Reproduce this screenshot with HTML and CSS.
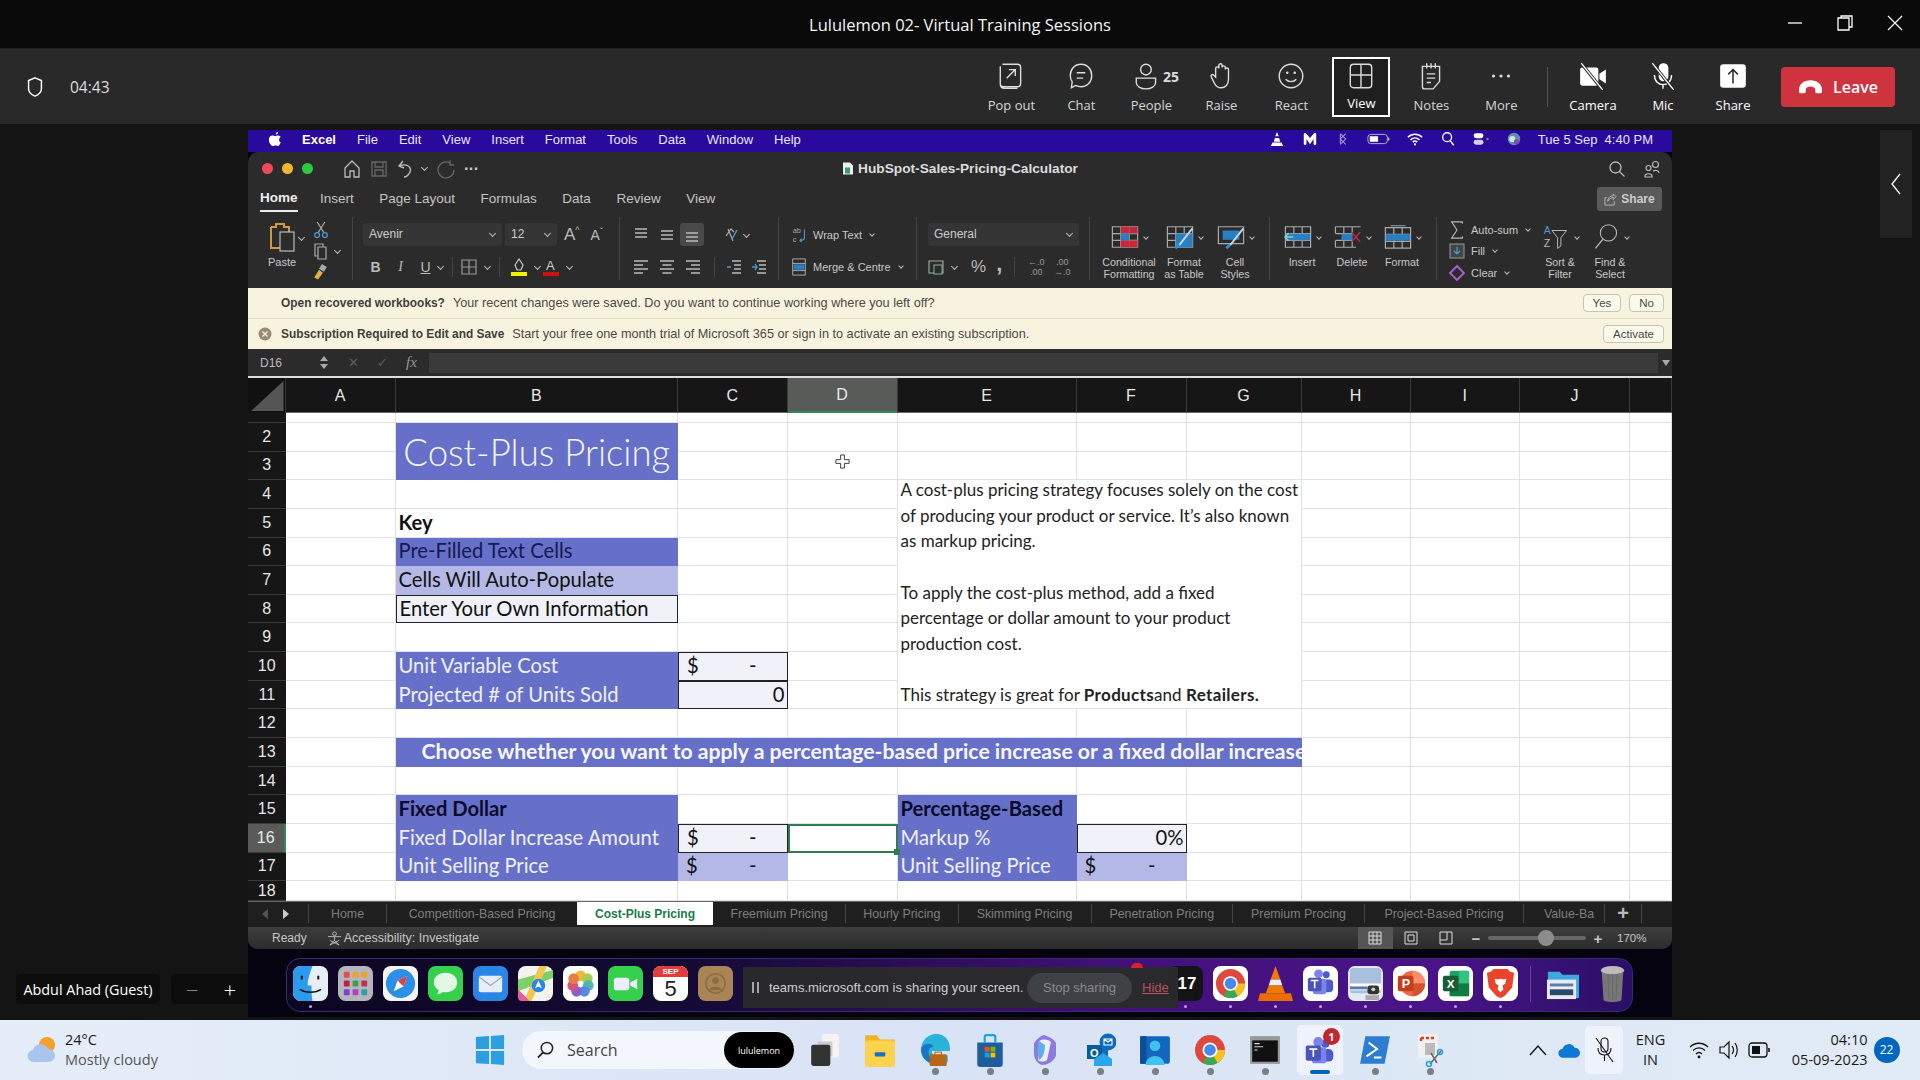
FILE: index.html
```html
<!DOCTYPE html>
<html lang="en">
<head>
  <meta charset="UTF-8" />
  <title>Lululemon 02- Virtual Training Sessions</title>
  <link rel="stylesheet" href="styles.css">
</head>
<body>
<svg class="defs">
  <symbol id="al-l" viewBox="0 0 16 16"><path d="M1 2h14M1 6h9M1 10h14M1 14h9" stroke="currentColor" stroke-width="1.5"/></symbol>
  <symbol id="al-c" viewBox="0 0 16 16"><path d="M1 2h14M3.5 6h9M1 10h14M3.5 14h9" stroke="currentColor" stroke-width="1.5"/></symbol>
  <symbol id="al-r" viewBox="0 0 16 16"><path d="M1 2h14M6 6h9M1 10h14M6 14h9" stroke="currentColor" stroke-width="1.5"/></symbol>
  <symbol id="grid" viewBox="0 0 30 26"><path d="M1.5 2h27v22h-27zM1.5 9.3h27M1.5 16.6h27M10.5 2v22M19.5 2v22" fill="none" stroke="#aaa" stroke-width="1.3"/></symbol>
</svg>

<header class="titlebar">
  <div class="title">Lululemon 02- Virtual Training Sessions</div>
  <div class="win-btns">
    <svg viewBox="0 0 20 20"><path d="M3 10h14" stroke="#fff" stroke-width="1.3"/></svg>
    <svg viewBox="0 0 20 20"><path d="M3 5h11v12H3zM6 5V3h11v11h-3" fill="none" stroke="#fff" stroke-width="1.3"/></svg>
    <svg viewBox="0 0 20 20"><path d="M3 3l14 14M17 3L3 17" stroke="#fff" stroke-width="1.2"/></svg>
  </div>
</header>

<nav class="toolbar">
  <div class="meeting">
    <svg class="shield" viewBox="0 0 20 24"><path d="M10 2l7 3v9c0 4-3 6.500-7 8-4-1.500-7-4-7-8V5z" fill="none" stroke="#fff" stroke-width="1.6"/></svg>
    <span>04:43</span>
  </div>
  <div class="tool"><svg viewBox="0 0 28 28"><path d="M6 3h14a3 3 0 0 1 3 3v15a3 3 0 0 1-3 3H7a3 3 0 0 1-3-3V5M4 21.500c0 2 1 4 4 4h12M10 16l8-8M12 8h6v6" fill="none" stroke="#ddd" stroke-width="1.300"/></svg><label>Pop out</label></div>
  <div class="tool"><svg viewBox="0 0 28 28"><path d="M14 3c6 0 10 4.500 10 10.500S20 24 14 24c-2 0-3.500-.4-5-1.200L5 25l.8-5.500C4.600 17.800 4 16 4 13.500 4 7.500 8 3 14 3zM10 11h8M10 16h6" fill="none" stroke="#ddd" stroke-width="1.300"/></svg><label>Chat</label></div>
  <div class="tool people"><div class="people-ic"><svg viewBox="0 0 28 28"><circle cx="13" cy="8" r="5" fill="none" stroke="#ddd" stroke-width="1.300"/><path d="M4 16h18v4c0 3.500-4 6-9 6s-9-2.500-9-6z" fill="none" stroke="#ddd" stroke-width="1.300"/></svg><b>25</b></div><label>People</label></div>
  <div class="tool"><svg viewBox="0 0 28 28"><path d="M9 15V7a1.500 1.500 0 0 1 3 0V4a1.500 1.500 0 0 1 3 0v2a1.500 1.500 0 0 1 3 0v2a1.500 1.500 0 0 1 3 0v9c0 5-3 8-7 8-3 0-5-2-6-4l-3-6c-1-2 1-3 2-2z" fill="none" stroke="#ddd" stroke-width="1.300"/></svg><label>Raise</label></div>
  <div class="tool"><svg viewBox="0 0 28 28"><circle cx="14" cy="14" r="11" fill="none" stroke="#ddd" stroke-width="1.300"/><circle cx="10.500" cy="11" r="1.200" fill="#ddd"/><circle cx="17.500" cy="11" r="1.200" fill="#ddd"/><path d="M9 17c2.500 3 7.500 3 10 0" fill="none" stroke="#ddd" stroke-width="1.300"/></svg><label>React</label></div>
  <div class="tool tool-on"><svg viewBox="0 0 28 28"><path d="M7 3h14a3 3 0 0 1 3 3v16a3 3 0 0 1-3 3H7a3 3 0 0 1-3-3V6a3 3 0 0 1 3-3zM14 3v22M4 13h20" fill="none" stroke="#ddd" stroke-width="1.300"/></svg><label>View</label></div>
  <div class="tool"><svg viewBox="0 0 28 28"><path d="M6 5h16v14l-6 7H8a2 2 0 0 1-2-2zM10 2v5M14 2v5M18 2v5M10 12h8M10 16h8M10 20h4" fill="none" stroke="#ddd" stroke-width="1.300"/></svg><label>Notes</label></div>
  <div class="tool"><svg viewBox="0 0 28 28"><circle cx="7" cy="14" r="1.500" fill="#ddd"/><circle cx="14" cy="14" r="1.500" fill="#ddd"/><circle cx="21" cy="14" r="1.500" fill="#ddd"/></svg><label>More</label></div>
  <div class="tool-sep"></div>
  <div class="tool bright"><svg viewBox="0 0 28 28"><path d="M2 8a2 2 0 0 1 2-2h13a2 2 0 0 1 2 2v13a2 2 0 0 1-2 2H4a2 2 0 0 1-2-2zM20 12l6-4v13l-6-4z" fill="#fff"/><path d="M3 2l20 25" stroke="#292929" stroke-width="3"/><path d="M3 2l20 25" stroke="#fff" stroke-width="1.300"/></svg><label>Camera</label></div>
  <div class="tool bright"><svg viewBox="0 0 28 28"><rect x="10" y="2" width="9" height="17" rx="4.500" fill="#fff"/><path d="M6 13c0 6 4 9 8 9s8-3 8-9M14 22v4" fill="none" stroke="#fff" stroke-width="1.300"/><path d="M4 2l20 25" stroke="#292929" stroke-width="3"/><path d="M4 2l20 25" stroke="#fff" stroke-width="1.300"/></svg><label>Mic</label></div>
  <div class="tool bright"><svg viewBox="0 0 28 28"><rect x="2" y="3" width="24" height="22" rx="3" fill="#fff"/><path d="M14 21V8M9.500 12.500L14 8l4.500 4.500" fill="none" stroke="#292929" stroke-width="1.400"/></svg><label>Share</label></div>
  <div class="leave"><svg viewBox="0 0 26 16"><path d="M1 11c0-6 5-10 12-10s12 4 12 10v2c0 1-.6 1.500-1.500 1.500h-4c-1 0-1.500-.5-1.500-1.500v-2c0-2-2-3.500-5-3.500S8 9 8 11v2c0 1-.5 1.500-1.500 1.500h-4C1.600 14.500 1 14 1 13z" fill="#fff"/></svg>Leave</div>
</nav>

<main class="stage">
  <aside class="left-col">
    <div class="name-pill">Abdul Ahad (Guest)</div>
    <div class="zoom-pill"><span class="dim">&minus;</span><span>+</span></div>
  </aside>

  <section class="share">
    <div class="mac-menu">
      <svg class="apple" viewBox="0 0 16 18"><path d="M11.500 1c.1 1.500-1.200 3-2.800 2.900C8.500 2.500 10 1.100 11.500 1zM14.500 13c-.8 2-2 4-3.300 4-1 0-1.500-.6-2.800-.6s-1.800.6-2.800.6C3.500 17 1 13 1 9.800 1 6.800 3 5 5 5c1.200 0 2.300.8 3.100.8S9.900 5 11.400 5c1.200 0 2.400.6 3.100 1.700-2.600 1.600-2.200 5.200 0 6.300z" fill="#fff"/></svg>
      <b>Excel</b><span>File</span><span>Edit</span><span>View</span><span>Insert</span><span>Format</span><span>Tools</span><span>Data</span><span>Window</span><span>Help</span>
      <div class="mac-status">
        <svg viewBox="0 0 16 18"><path d="M8 1l2 5H6zM5.500 8h5l1 4h-7zM3 13h10l2 4H1z" fill="#fff"/></svg>
        <svg viewBox="0 0 18 18"><path d="M2 15V4c0-2 2-2 3-1l4 5 4-5c1-1 3-1 3 1v11c-1 1.500-3 1-3-1V9l-4 6-4-6v5c0 2-2 2.500-3 1z" fill="#fff"/></svg>
        <svg viewBox="0 0 18 18"><path d="M6 3l6 6-6 6M6 3v12M12 3L6 9l6 6" fill="none" stroke="#9a93d8" stroke-width="1.200"/></svg>
        <svg viewBox="0 0 26 14"><rect x="1" y="2" width="21" height="10" rx="3" fill="none" stroke="#bbb" stroke-width="1"/><rect x="3" y="4" width="9" height="6" fill="#fff"/><path d="M23.500 5.500v3" stroke="#bbb" stroke-width="1.500"/></svg>
        <svg viewBox="0 0 18 18"><path d="M1 7c4.500-4.500 11.500-4.500 16 0M4 10c3-3 7-3 10 0M6.500 12.500c1.500-1.500 3.500-1.500 5 0" fill="none" stroke="#fff" stroke-width="1.700"/><circle cx="9" cy="15" r="1.300" fill="#fff"/></svg>
        <svg viewBox="0 0 18 18"><circle cx="8" cy="7" r="5" fill="none" stroke="#fff" stroke-width="1.500"/><path d="M11.500 11l4 5" stroke="#fff" stroke-width="1.500"/></svg>
        <svg viewBox="0 0 22 18"><rect x="2" y="2" width="12" height="6" rx="3" fill="#fff"/><rect x="2" y="10" width="12" height="6" rx="3" fill="#fff" opacity=".8"/><circle cx="19" cy="9" r="1.500" fill="#c06a5a"/></svg>
        <svg viewBox="0 0 18 18"><circle cx="9" cy="9" r="7" fill="#5f8fb0"/><circle cx="7" cy="9" r="3.500" fill="#d0e4e0"/><circle cx="12" cy="12" r="3" fill="#7a4fb0"/></svg>
        <span>Tue 5 Sep&nbsp; 4:40 PM</span>
      </div>
    </div>

    <div class="xl">
      <div class="xl-title">
        <div class="xl-title-l">
          <i class="dot red"></i><i class="dot yellow"></i><i class="dot green"></i>
          <svg class="qa qa-first" viewBox="0 0 20 20"><path d="M3 18V9l7-7 7 7v9h-5v-6H8v6z" fill="none" stroke="#bbb" stroke-width="1.300"/></svg>
          <svg class="qa" viewBox="0 0 20 20"><path d="M3 3h14v14H3zM6 3v5h8V3M6 17v-6h8v6" fill="none" stroke="#666" stroke-width="1.300"/></svg>
          <svg class="qa" viewBox="0 0 20 20"><path d="M7 2L3 7l5 2M3 7c8-3 13 1 11 6-1 3-4 5-6 5" fill="none" stroke="#bbb" stroke-width="1.400"/></svg>
          <i class="v v-qa"></i>
          <svg class="qa" viewBox="0 0 20 20"><path d="M13 4a8 8 0 1 0 4 7M13 1v5h4" fill="none" stroke="#666" stroke-width="1.300"/></svg>
          <span class="qa-more">&middot;&middot;&middot;</span>
        </div>
        <div class="xl-name"><svg viewBox="0 0 12 14"><path d="M1 1h7l3 3v9H1z" fill="#eee"/><rect x="3" y="6" width="5" height="6" fill="#3c9c68"/></svg>HubSpot-Sales-Pricing-Calculator</div>
        <div class="xl-title-r">
          <svg viewBox="0 0 18 18"><circle cx="7.500" cy="7.500" r="5.500" fill="none" stroke="#bbb" stroke-width="1.300"/><path d="M11.500 11.500l5 5" stroke="#bbb" stroke-width="1.300"/></svg>
          <svg viewBox="0 0 18 18"><circle cx="12.500" cy="4.500" r="3" fill="none" stroke="#bbb" stroke-width="1.200"/><circle cx="5.500" cy="8" r="2.500" fill="none" stroke="#bbb" stroke-width="1.200"/><path d="M2 16c0-3 7-3 7 0v1H2zM10 11c2-1 6-1 6 2" fill="none" stroke="#bbb" stroke-width="1.200"/></svg>
        </div>
      </div>

      <div class="xl-tabs">
        <span class="xl-tab on">Home</span><span class="xl-tab">Insert</span><span class="xl-tab">Page Layout</span><span class="xl-tab">Formulas</span><span class="xl-tab">Data</span><span class="xl-tab">Review</span><span class="xl-tab">View</span>
        <div class="xl-share"><svg viewBox="0 0 14 14"><path d="M3 5H1v8h10V9M4 9c0-4 3-6 6-6V1l3 3-3 3V5c-2 0-4 1-6 4z" fill="none" stroke="#bbb" stroke-width="1"/></svg>Share</div>
      </div>

      <div class="ribbon">
        <div class="rg rg-clip">
          <div class="paste">
            <svg viewBox="0 0 30 32"><path d="M4 6h5V3h8v3h5v5M15 27H4V6" fill="none" stroke="#d0993c" stroke-width="2"/><rect x="13" y="11" width="14" height="19" fill="#2b2b2b" stroke="#bbb" stroke-width="1.200"/></svg>
            <span>Paste</span>
          </div>
          <i class="v v-paste"></i>
          <div class="clip-col">
            <svg viewBox="0 0 16 18"><path d="M4 1l7 11M12 1L5 12" stroke="#aaa" stroke-width="1.200"/><circle cx="4" cy="14.500" r="2.500" fill="none" stroke="#4a9ad0" stroke-width="1.300"/><circle cx="12" cy="14.500" r="2.500" fill="none" stroke="#4a9ad0" stroke-width="1.300"/></svg>
            <div><svg viewBox="0 0 16 18"><path d="M2 2h8v3h3v12H5v-3H2zM5 14V5h5" fill="none" stroke="#aaa" stroke-width="1.200"/></svg><i class="v"></i></div>
            <svg viewBox="0 0 16 18"><path d="M9 1l5 3-3 5-5-3z" fill="#aaa"/><path d="M6 7l4 3-5 7-4-2z" fill="#e0b040"/></svg>
          </div>
        </div>

        <div class="rg rg-font">
          <div class="rrow">
            <div class="sel sel-font">Avenir<i class="v"></i></div>
            <div class="sel sel-size">12<i class="v"></i></div>
            <span class="a-big">A<sup>^</sup></span><span class="a-small">A<sup>&#711;</sup></span>
          </div>
          <div class="rrow rrow-2">
            <b class="tb">B</b><em class="tb tb-i">I</em><u class="tb">U</u><i class="v"></i>
            <i class="rsep"></i>
            <svg class="ic-16" viewBox="0 0 16 16"><path d="M1 1h14v14H1zM8 1v14M1 8h14" fill="none" stroke="#999" stroke-width="1.200"/></svg><i class="v"></i>
            <i class="rsep"></i>
            <svg class="ic-16 ic-fill" viewBox="0 0 16 18"><path d="M8 1l4 6-2 5H6L4 7z" fill="none" stroke="#ccc" stroke-width="1.200"/><rect x="0" y="14" width="16" height="4" fill="#f0f000"/></svg><i class="v"></i>
            <svg class="ic-16 ic-fill" viewBox="0 0 16 18"><text x="3" y="12" font-size="13" fill="#ccc" font-family="Liberation Sans">A</text><rect x="0" y="14" width="16" height="4" fill="#d01010"/></svg><i class="v"></i>
          </div>
        </div>

        <div class="rg rg-align">
          <div class="rrow">
            <svg class="al" viewBox="0 0 16 16"><path d="M2 2h12M2 6h12M2 10h12" stroke="#bbb" stroke-width="1.300"/></svg>
            <svg class="al" viewBox="0 0 16 16"><path d="M2 4h12M2 8h12M2 12h12" stroke="#bbb" stroke-width="1.300"/></svg>
            <span class="al-on"><svg class="al" viewBox="0 0 16 16"><path d="M2 6h12M2 10h12M2 14h12" stroke="#bbb" stroke-width="1.300"/></svg></span>
            <svg class="al al-orient" viewBox="0 0 16 16"><path d="M4 2l5 12M2 9l5-7 3 3" fill="none" stroke="#aaa" stroke-width="1.200"/><path d="M13 3l-5 9" stroke="#4a9ad0" stroke-width="1.500"/></svg><i class="v"></i>
          </div>
          <div class="rrow rrow-2">
            <svg class="al"><use href="#al-l"/></svg><svg class="al"><use href="#al-c"/></svg><svg class="al"><use href="#al-r"/></svg>
            <i class="rsep rsep-al"></i>
            <svg class="al al-ind" viewBox="0 0 16 16"><path d="M6 2h9M8 6h7M8 10h7M6 14h9" stroke="#bbb" stroke-width="1.300"/><path d="M1 8h4" stroke="#4a9ad0" stroke-width="1.500"/></svg>
            <svg class="al al-ind2" viewBox="0 0 16 16"><path d="M6 2h9M8 6h7M8 10h7M6 14h9" stroke="#bbb" stroke-width="1.300"/><path d="M1 8h5M4 5l2 3-2 3" fill="none" stroke="#4a9ad0" stroke-width="1.300"/></svg>
          </div>
        </div>

        <div class="rg rg-wrap">
          <div class="rrow"><svg class="ic-16" viewBox="0 0 16 20"><text x="1" y="8" font-size="8" fill="#aaa" font-family="Liberation Sans">ab</text><text x="1" y="18" font-size="8" fill="#aaa" font-family="Liberation Sans">c</text><path d="M14 4v9c0 2-2 3-5 3M11 14l-2 2 2 2" fill="none" stroke="#4a9ad0" stroke-width="1.200"/></svg><span>Wrap Text</span><i class="v"></i></div>
          <div class="rrow rrow-2"><svg class="ic-16" viewBox="0 0 16 20"><path d="M1 1h14v18H1zM1 6h14M1 14h14" fill="none" stroke="#aaa" stroke-width="1.100"/><rect x="2" y="7" width="12" height="6" fill="#2a7fc0"/></svg><span>Merge &amp; Centre</span><i class="v"></i></div>
        </div>

        <div class="rg rg-num">
          <div class="sel sel-num">General<i class="v"></i></div>
          <div class="rrow rrow-2">
            <svg class="ic-16" viewBox="0 0 16 16"><path d="M1 2h14v12H1z" fill="none" stroke="#aaa" stroke-width="1.100"/><rect x="6" y="6" width="8" height="9" fill="#2b2b2b" stroke="#8bb58b"/></svg><i class="v"></i>
            <span class="pct">%</span><span class="cma">,</span><i class="rsep"></i>
            <span class="dec">&larr;.0<br>.00</span><span class="dec">.00<br>&rarr;.0</span>
          </div>
        </div>

        <div class="rg rg-styles">
          <div class="big bw56"><div class="big-ic">
            <svg viewBox="0 0 30 26"><use href="#grid"/><rect x="10.500" y="2" width="9" height="7.300" fill="#c7283c"/><rect x="10.500" y="9.300" width="9" height="7.300" fill="#2a7fc0"/><rect x="10.500" y="16.600" width="9" height="7.400" fill="#c7283c"/><rect x="19.500" y="2" width="9" height="7.300" fill="#c7283c" opacity=".9"/><rect x="19.500" y="16.600" width="9" height="7.400" fill="#c7283c"/></svg><i class="v"></i></div>
            <span>Conditional<br>Formatting</span></div>
          <div class="big bw54"><div class="big-ic">
            <svg viewBox="0 0 30 26"><use href="#grid"/><rect x="10.500" y="9.300" width="18" height="14.700" fill="#2a7fc0"/><path d="M28 4L14 22" stroke="#c8d8e8" stroke-width="2"/><path d="M14 21l-4 4" stroke="#2a90d8" stroke-width="3"/></svg><i class="v"></i></div>
            <span>Format<br>as Table</span></div>
          <div class="big bw48"><div class="big-ic">
            <svg viewBox="0 0 30 26"><path d="M1.500 2h27v18h-27z" fill="none" stroke="#aaa" stroke-width="1.300"/><rect x="6" y="6" width="18" height="10" fill="#2a7fc0"/><path d="M28 4L14 22" stroke="#c8d8e8" stroke-width="2"/><path d="M14 21l-4 4" stroke="#2a90d8" stroke-width="3"/></svg><i class="v"></i></div>
            <span>Cell<br>Styles</span></div>
        </div>

        <div class="rg rg-cells">
          <div class="big bw50"><div class="big-ic">
            <svg viewBox="0 0 30 26"><use href="#grid"/><rect x="2" y="9.500" width="26" height="7" fill="#2a7fc0"/><path d="M10 13H1M5 9l-4 4 4 4" fill="none" stroke="#8cc" stroke-width="1.400"/></svg><i class="v"></i></div>
            <span>Insert</span></div>
          <div class="big bw50"><div class="big-ic">
            <svg viewBox="0 0 30 26"><path d="M1.500 2h27M1.500 24h22M1.500 2v7M1.500 17v7M10.500 2v7M19.500 2v7M10.500 17v7M19.500 17v7M1.500 9.300h18M1.500 16.600h18" fill="none" stroke="#aaa" stroke-width="1.300"/><rect x="8" y="9.500" width="12" height="7" fill="#2a7fc0"/><path d="M19 8l9 10M28 8l-9 10" stroke="#c7283c" stroke-width="1.500"/></svg><i class="v"></i></div>
            <span>Delete</span></div>
          <div class="big bw50"><div class="big-ic">
            <svg viewBox="0 0 30 26"><path d="M7 1h16" stroke="#8ab" stroke-width="1.200"/><use href="#grid" y="1"/><rect x="2" y="10" width="26" height="7" fill="#2a7fc0"/></svg><i class="v"></i></div>
            <span>Format</span></div>
        </div>

        <div class="rg rg-edit">
          <div class="edit-col">
            <div class="edit-row"><svg class="ic-16" viewBox="0 0 16 20"><path d="M14 3V1H2l6 9-6 9h12v-2" fill="none" stroke="#bbb" stroke-width="1.200"/></svg><span>Auto-sum</span><i class="v"></i></div>
            <div class="edit-row"><svg class="ic-16" viewBox="0 0 16 16"><rect x="1" y="1" width="14" height="14" fill="#444" stroke="#999"/><path d="M8 4v7M5 8l3 3 3-3" fill="none" stroke="#4a9ad0" stroke-width="1.200"/></svg><span>Fill</span><i class="v"></i></div>
            <div class="edit-row"><svg class="ic-16" viewBox="0 0 16 16"><path d="M8 1l7 7-7 7-7-7z" fill="none" stroke="#b060d0" stroke-width="1.800"/></svg><span>Clear</span><i class="v"></i></div>
          </div>
          <div class="big bw50"><div class="big-ic">
            <svg viewBox="0 0 30 32"><text x="0" y="12" font-size="13" fill="#4a9ad0" font-family="Liberation Sans">A</text><text x="0" y="28" font-size="13" fill="#bbb" font-family="Liberation Sans">Z</text><path d="M10 8h18l-7 9v10l-4 3V17z" fill="none" stroke="#bbb" stroke-width="1.200"/></svg><i class="v"></i></div>
            <span>Sort &amp;<br>Filter</span></div>
          <div class="big bw50"><div class="big-ic">
            <svg viewBox="0 0 30 32"><circle cx="18" cy="11" r="10" fill="none" stroke="#bbb" stroke-width="1.300"/><path d="M11 19L2 30" stroke="#bbb" stroke-width="1.600"/></svg><i class="v"></i></div>
            <span>Find &amp;<br>Select</span></div>
        </div>
      </div>

      <div class="notice">
        <p><b>Open recovered workbooks?</b>Your recent changes were saved. Do you want to continue working where you left off?</p>
        <button>Yes</button><button>No</button>
      </div>
      <div class="notice notice-2">
        <svg viewBox="0 0 14 14"><circle cx="7" cy="7" r="6.500" fill="#9a8a72"/><path d="M4.500 4.500l5 5M9.500 4.500l-5 5" stroke="#f8f3df" stroke-width="1.300"/></svg>
        <p><b>Subscription Required to Edit and Save</b>Start your free one month trial of Microsoft 365 or sign in to activate an existing subscription.</p>
        <button>Activate</button>
      </div>

      <div class="formula">
        <span class="name-box">D16</span>
        <span class="stepper"><i></i><i></i></span>
        <span class="fx-x">&#10005;</span><span class="fx-c">&#10003;</span><em class="fx">fx</em>
        <div class="fx-input"></div>
        <span class="fx-arrow"></span>
      </div>

      <div class="sheet">
        <div class="corner"><i></i></div><div class="ch">A</div><div class="ch">B</div><div class="ch">C</div><div class="ch ch-on">D</div><div class="ch">E</div><div class="ch">F</div><div class="ch">G</div><div class="ch">H</div><div class="ch">I</div><div class="ch">J</div><div class="ch"></div>

        <div class="rh"></div><div class="c"></div><div class="c"></div><div class="c"></div><div class="c"></div><div class="c"></div><div class="c"></div><div class="c"></div><div class="c"></div><div class="c"></div><div class="c"></div><div class="c"></div>

        <div class="rh">2</div><div class="c"></div><div class="c sheet-title">Cost-Plus Pricing</div><div class="c"></div><div class="c"></div><div class="c"></div><div class="c"></div><div class="c"></div><div class="c"></div><div class="c"></div><div class="c"></div><div class="c"></div>
        <div class="rh">3</div><div class="c"></div><div class="c"></div><div class="c cursor-cell"><svg viewBox="0 0 16 16"><path d="M6 1h4v5h5v4h-5v5H6v-5H1V6h5z" fill="#fff" stroke="#333" stroke-width="1"/></svg></div><div class="c"></div><div class="c"></div><div class="c"></div><div class="c"></div><div class="c"></div><div class="c"></div><div class="c"></div>
        <div class="rh">4</div><div class="c"></div><div class="c"></div><div class="c"></div><div class="c"></div>
        <div class="c textbox">
          <div class="textbox-in">A cost-plus pricing strategy focuses solely on the cost<br>of producing your product or service. It&rsquo;s also known<br>as markup pricing.<br><br>To apply the cost-plus method, add a fixed<br>percentage or dollar amount to your product<br>production cost.<br><br>This strategy is great for <b>Products</b>and <b>Retailers.</b></div>
        </div>
        <div class="c"></div><div class="c"></div><div class="c"></div><div class="c"></div>
        <div class="rh">5</div><div class="c"></div><div class="c t"><b>Key</b></div><div class="c"></div><div class="c"></div><div class="c"></div><div class="c"></div><div class="c"></div><div class="c"></div>
        <div class="rh">6</div><div class="c"></div><div class="c t fill navy">Pre-Filled Text Cells</div><div class="c"></div><div class="c"></div><div class="c"></div><div class="c"></div><div class="c"></div><div class="c"></div>
        <div class="rh">7</div><div class="c"></div><div class="c t fill-2">Cells Will Auto-Populate</div><div class="c"></div><div class="c"></div><div class="c"></div><div class="c"></div><div class="c"></div><div class="c"></div>
        <div class="rh">8</div><div class="c"></div><div class="c t input">Enter Your Own Information</div><div class="c"></div><div class="c"></div><div class="c"></div><div class="c"></div><div class="c"></div><div class="c"></div>
        <div class="rh">9</div><div class="c"></div><div class="c"></div><div class="c"></div><div class="c"></div><div class="c"></div><div class="c"></div><div class="c"></div><div class="c"></div>
        <div class="rh">10</div><div class="c"></div><div class="c t fill lbl">Unit Variable Cost</div><div class="c t input acct"><span>$</span><span>-</span></div><div class="c"></div><div class="c"></div><div class="c"></div><div class="c"></div><div class="c"></div>
        <div class="rh">11</div><div class="c"></div><div class="c t fill lbl">Projected # of Units Sold</div><div class="c t input num">0</div><div class="c"></div><div class="c"></div><div class="c"></div><div class="c"></div><div class="c"></div>
        <div class="rh">12</div><div class="c"></div><div class="c"></div><div class="c"></div><div class="c"></div><div class="c"></div><div class="c"></div><div class="c"></div><div class="c"></div><div class="c"></div><div class="c"></div><div class="c"></div>
        <div class="rh">13</div><div class="c"></div><div class="c banner"><span>Choose whether you want to apply a percentage-based price increase or a fixed dollar increase</span></div><div class="c"></div><div class="c"></div><div class="c"></div><div class="c"></div>
        <div class="rh">14</div><div class="c"></div><div class="c"></div><div class="c"></div><div class="c"></div><div class="c"></div><div class="c"></div><div class="c"></div><div class="c"></div><div class="c"></div><div class="c"></div><div class="c"></div>
        <div class="rh">15</div><div class="c"></div><div class="c t fill"><b>Fixed Dollar</b></div><div class="c"></div><div class="c"></div><div class="c t fill"><b>Percentage-Based</b></div><div class="c"></div><div class="c"></div><div class="c"></div><div class="c"></div><div class="c"></div><div class="c"></div>
        <div class="rh rh-on">16</div><div class="c"></div><div class="c t fill lbl">Fixed Dollar Increase Amount</div><div class="c t input acct"><span>$</span><span>-</span></div><div class="c active"></div><div class="c t fill lbl">Markup %</div><div class="c t input num">0%</div><div class="c"></div><div class="c"></div><div class="c"></div><div class="c"></div><div class="c"></div>
        <div class="rh">17</div><div class="c"></div><div class="c t fill lbl">Unit Selling Price</div><div class="c t fill-2 acct"><span>$</span><span>-</span></div><div class="c"></div><div class="c t fill lbl">Unit Selling Price</div><div class="c t fill-2 acct"><span>$</span><span>-</span></div><div class="c"></div><div class="c"></div><div class="c"></div><div class="c"></div><div class="c"></div>
        <div class="rh">18</div><div class="c"></div><div class="c"></div><div class="c"></div><div class="c"></div><div class="c"></div><div class="c"></div><div class="c"></div><div class="c"></div><div class="c"></div><div class="c"></div><div class="c"></div>
      </div>

      <div class="sheet-tabs">
        <div class="tab-nav"><i class="arr-l"></i><i class="arr-r"></i></div>
        <span class="stab st-78">Home</span><span class="stab st-190">Competition-Based Pricing</span><span class="stab stab-on st-136">Cost-Plus Pricing</span><span class="stab st-133">Freemium Pricing</span><span class="stab st-112">Hourly Pricing</span><span class="stab st-133">Skimming Pricing</span><span class="stab st-142">Penetration Pricing</span><span class="stab st-132">Premium Procing</span><span class="stab st-159">Project-Based Pricing</span><span class="stab st-81">Value-Ba</span><span class="stab st-37 plus">+</span>
      </div>

      <div class="statusbar">
        <span class="ready">Ready</span>
        <svg viewBox="0 0 16 16"><circle cx="8" cy="3" r="2" fill="none" stroke="#bbb"/><path d="M1 6h14M8 6v4M3 15l5-5 5 5M3 10l10 5M13 10L3 15" fill="none" stroke="#bbb" stroke-width="1"/></svg>
        <span>Accessibility: Investigate</span>
        <div class="status-r">
          <span class="vw vw-on"><svg viewBox="0 0 14 14"><path d="M1 1h12v12H1zM1 5h12M1 9h12M5 1v12M9 1v12" fill="none" stroke="#ddd"/></svg></span>
          <span class="vw"><svg viewBox="0 0 14 14"><path d="M1 1h12v12H1zM4 4h6v6H4z" fill="none" stroke="#ddd"/></svg></span>
          <span class="vw"><svg viewBox="0 0 14 14"><path d="M1 1h12v12H1zM1 9h7V1" fill="none" stroke="#ddd"/></svg></span>
          <span class="zm">&minus;</span>
          <div class="slider"><i></i></div>
          <span class="zm">+</span>
          <span class="pct-z">170%</span>
        </div>
      </div>
    </div>

    <div class="dock-strip">
      <div class="dock">
        <div class="di lit"><svg viewBox="0 0 36 36"><rect width="36" height="36" rx="8" fill="#e8eef5"/><path d="M0 8a8 8 0 0 1 8-8h12c-3 8-5 14-5 20h4c0 5 0 10 1 16H8a8 8 0 0 1-8-8z" fill="#2c9aee"/><path d="M9 10v4M26 10v4" stroke="#111" stroke-width="2"/><path d="M7 24c6 4 16 4 22 0" fill="none" stroke="#111" stroke-width="1.500"/></svg></div>
        <div class="di"><svg viewBox="0 0 36 36"><rect width="36" height="36" rx="8" fill="#b5b5bd"/><g><rect x="6" y="6" width="6" height="6" rx="1" fill="#e05050"/><rect x="15" y="6" width="6" height="6" rx="1" fill="#f0a030"/><rect x="24" y="6" width="6" height="6" rx="1" fill="#f0a030"/><rect x="6" y="15" width="6" height="6" rx="1" fill="#c02040"/><rect x="15" y="15" width="6" height="6" rx="1" fill="#40a050"/><rect x="24" y="15" width="6" height="6" rx="1" fill="#c03050"/><rect x="6" y="24" width="6" height="6" rx="1" fill="#8040d0"/><rect x="15" y="24" width="6" height="6" rx="1" fill="#b040c0"/><rect x="24" y="24" width="6" height="6" rx="1" fill="#30a0a0"/></g></svg></div>
        <div class="di"><svg viewBox="0 0 36 36"><rect width="36" height="36" rx="8" fill="#f4f4f6"/><circle cx="18" cy="18" r="15" fill="#2a8fe8"/><path d="M25 10L15 15l-4 11 10-5z" fill="#fff"/><path d="M25 10L15 15l6 6z" fill="#e04040"/></svg></div>
        <div class="di"><svg viewBox="0 0 36 36"><rect width="36" height="36" rx="8" fill="#35d04c"/><path d="M18 7c7 0 12 4 12 10s-5 10-12 10c-1 0-2 0-3-.3-1 1.300-3 2.300-6 2.300 1-1 2-2.500 2-4-3-2-5-4.500-5-8C6 11 11 7 18 7z" fill="#fff" opacity=".85"/></svg></div>
        <div class="di"><svg viewBox="0 0 36 36"><rect width="36" height="36" rx="8" fill="#2a86e6"/><rect x="6" y="10" width="24" height="17" rx="2" fill="#e8eef8"/><path d="M6 11l12 9 12-9" fill="none" stroke="#9ab" stroke-width="1.200"/></svg></div>
        <div class="di"><svg viewBox="0 0 36 36"><rect width="36" height="36" rx="8" fill="#f4f4ef"/><path d="M0 14L36 4v8L0 26z" fill="#7ccf6a"/><path d="M22 0h8L14 36H6z" fill="#f0c850"/><path d="M0 24l12 12H4a4 4 0 0 1-4-4z" fill="#e060a0"/><circle cx="21" cy="20" r="7" fill="#2a86e6"/><path d="M21 15l3.500 8-3.500-2-3.500 2z" fill="#fff"/></svg></div>
        <div class="di"><svg viewBox="0 0 36 36"><rect width="36" height="36" rx="8" fill="#fff"/><g opacity=".9"><circle cx="18" cy="10" r="5.500" fill="#f0b020"/><circle cx="25" cy="13" r="5.500" fill="#a0c840"/><circle cx="26" cy="20" r="5.500" fill="#40b0a0"/><circle cx="22" cy="26" r="5.500" fill="#4080e0"/><circle cx="14" cy="26" r="5.500" fill="#8050c0"/><circle cx="10" cy="20" r="5.500" fill="#d04070"/><circle cx="11" cy="13" r="5.500" fill="#e87030"/></g></svg></div>
        <div class="di"><svg viewBox="0 0 36 36"><rect width="36" height="36" rx="8" fill="#35d04c"/><rect x="6" y="12" width="16" height="13" rx="3" fill="#eef"/><path d="M23 17l7-4v11l-7-4z" fill="#eef"/></svg></div>
        <div class="di"><div class="cal"><b>SEP</b><span>5</span></div></div>
        <div class="di"><svg viewBox="0 0 36 36"><rect width="36" height="36" rx="8" fill="#a98455"/><circle cx="18" cy="18" r="10" fill="none" stroke="#8d6c42" stroke-width="1.500"/><circle cx="18" cy="15" r="3.500" fill="#8d6c42"/><path d="M11 25c2-5 12-5 14 0" fill="#8d6c42"/></svg></div>
        <div class="share-bar">
          <span class="pause"></span>
          <span class="share-txt">teams.microsoft.com is sharing your screen.</span>
          <span class="stop">Stop sharing</span>
          <span class="hide">Hide</span>
          <i class="badge-red"></i>
        </div>
        <div class="di lit tv"><span>17</span></div>
        <div class="di lit"><svg viewBox="0 0 36 36"><rect width="36" height="36" rx="8" fill="#fff"/><circle cx="18" cy="18" r="15" fill="#dd4a3c"/><path d="M18 18L31 25.500A15 15 0 0 1 11 31.200z" fill="#3aa757"/><path d="M18 18h15a15 15 0 0 1-7.500 13L18 18z" fill="#f8c120"/><circle cx="18" cy="18" r="7.500" fill="#fff"/><circle cx="18" cy="18" r="5.800" fill="#4688f0"/></svg></div>
        <div class="di lit"><svg viewBox="0 0 36 36"><path d="M18 0l5 14H13z" fill="#f07a00"/><path d="M13 14h10l2 6H11z" fill="#eee"/><path d="M11 20h14l3 8H8z" fill="#f07a00"/><path d="M2 28h32l2 8H0z" fill="#e86e00"/></svg></div>
        <div class="di lit"><svg viewBox="0 0 36 36"><rect width="36" height="36" rx="8" fill="#fff"/><circle cx="24" cy="9" r="3.500" fill="#5059c9"/><rect x="20" y="14" width="11" height="13" rx="4" fill="#5059c9"/><circle cx="16" cy="8" r="4.500" fill="#7b83eb"/><rect x="10" y="13" width="14" height="16" rx="3" fill="#7b83eb"/><rect x="5" y="12" width="14" height="14" rx="2" fill="#4b53bc"/><path d="M8 15h8M12 15v8" stroke="#fff" stroke-width="1.600"/></svg></div>
        <div class="di lit"><svg viewBox="0 0 36 36"><rect width="36" height="36" rx="7" fill="#e4eaf4"/><rect x="2" y="2" width="32" height="26" rx="3" fill="#a8c0de"/><rect x="2" y="18" width="32" height="7" fill="#fff"/><rect x="2" y="21" width="18" height="3" fill="#5a7ea8"/><rect x="20" y="20" width="12" height="9" rx="3" fill="#333"/><circle cx="26" cy="24" r="2" fill="#ccc"/><path d="M18 30h14v5H18z" fill="#aaa"/></svg></div>
        <div class="di lit"><svg viewBox="0 0 36 36"><rect width="36" height="36" rx="8" fill="#fff"/><circle cx="20" cy="18" r="13" fill="#ed6c47"/><path d="M20 18V5a13 13 0 0 1 13 13z" fill="#ff8f6b"/><path d="M20 18h13a13 13 0 0 1-13 13z" fill="#d35230"/><rect x="5" y="10" width="16" height="16" rx="2" fill="#c43e1c"/><text x="9" y="23" font-size="13" font-family="Liberation Sans" font-weight="700" fill="#fff">P</text></svg></div>
        <div class="di lit"><svg viewBox="0 0 36 36"><rect width="36" height="36" rx="8" fill="#fff"/><rect x="12" y="5" width="20" height="26" rx="2" fill="#21a366"/><rect x="22" y="5" width="10" height="13" fill="#33c481"/><rect x="12" y="18" width="20" height="13" fill="#107c41"/><rect x="5" y="10" width="16" height="16" rx="2" fill="#185c37"/><text x="9" y="23" font-size="12" font-family="Liberation Sans" font-weight="700" fill="#fff">X</text></svg></div>
        <div class="di lit"><svg viewBox="0 0 36 36"><rect width="36" height="36" rx="8" fill="#fff"/><path d="M11 3h14l3 3 4 1-2 15-8 9-4 2-4-2-8-9L4 7l4-1z" fill="#e8452c"/><path d="M12 13l3 1 3-1 3 1 3-1-1 5-3 2 1 4-3 3-3-3 1-4-3-2z" fill="#fff"/></svg></div>
        <i class="dock-sep"></i>
        <div class="di"><svg viewBox="0 0 36 36"><path d="M2 6h12l3 3h17v24H2z" fill="#3da8e0"/><rect x="1" y="14" width="30" height="20" fill="#e8ecf2"/><rect x="4" y="18" width="24" height="3" fill="#5a7ea8"/><rect x="4" y="24" width="24" height="6" fill="#2b4a6a"/></svg></div>
        <div class="di di-trash"><svg viewBox="0 0 30 42"><ellipse cx="15" cy="6" rx="13" ry="5" fill="#bbb"/><path d="M3 7l2 31c0 2 4 3 10 3s10-1 10-3l2-31c-4 4-20 4-24 0z" fill="#777"/><path d="M10 10l1 28M15 11v28M20 10l-1 28" stroke="#666"/></svg></div>
      </div>
    </div>
  </section>

  <aside class="right-col"><div class="collapse"><svg viewBox="0 0 14 24"><path d="M11 2L3 12l8 10" fill="none" stroke="#fff" stroke-width="1.300"/></svg></div></aside>
</main>

<footer class="taskbar">
  <div class="weather">
    <svg viewBox="0 0 32 32"><circle cx="22" cy="11" r="8" fill="#f5a02a"/><path d="M9 28a6 6 0 0 1-1-12 8 8 0 0 1 15-1 6.500 6.500 0 0 1 1 13z" fill="#a9c5ee"/></svg>
    <div><div>24&deg;C</div><div class="weather-sub">Mostly cloudy</div></div>
  </div>
  <svg class="start" viewBox="0 0 30 32"><path d="M0 2l14-1v14H0zM16 1l14-1v15H16zM0 17h14v14L0 30zM16 17h14v15l-14-1z" fill="#2b9fe0"/></svg>
  <div class="search">
    <svg viewBox="0 0 20 20"><circle cx="11.500" cy="8" r="6" fill="none" stroke="#222" stroke-width="1.600"/><path d="M7.500 12.500L2 18" stroke="#222" stroke-width="2"/></svg>
    <span>Search</span>
    <div class="search-art">lululemon</div>
  </div>
  <div class="tb-apps">
    <div class="app"><svg viewBox="0 0 28 32"><rect x="11" y="1" width="16" height="22" rx="2" fill="#f4f4f4"/><rect x="7" y="8" width="14" height="14" fill="#ccc"/><rect x="1" y="11" width="18" height="20" rx="2" fill="#333"/></svg></div>
    <div class="app"><svg viewBox="0 0 30 32"><path d="M1 2h11l3 4h14v24H1z" fill="#f0b323"/><rect x="1" y="7" width="28" height="25" rx="2" fill="#fcd34d"/><rect x="10" y="18" width="10" height="4" rx="1" fill="#1a6fc0"/></svg></div>
    <div class="app dotted"><svg viewBox="0 0 30 32"><path d="M2 14C3 6 9 1 16 1c8 0 13 6 13 13v3H12c0 4 4 6 8 6 3 0 5-1 7-2v6c-3 2-6 3-9 3C8 30 2 24 2 14z" fill="#2ab3d8"/><path d="M2 14c3-5 10-5 12-1-3 0-5 2-5 5 0 4 3 8 7 10C8 29 1 23 2 14z" fill="#1a74c8"/><rect x="10" y="20" width="16" height="11" rx="1" fill="#b8661a"/><rect x="15" y="18" width="6" height="3" fill="none" stroke="#b8661a"/></svg></div>
    <div class="app dotted"><svg viewBox="0 0 28 32"><path d="M2 9h24v20a3 3 0 0 1-3 3H5a3 3 0 0 1-3-3z" fill="#1f5d9c"/><path d="M9 9V4a2 2 0 0 1 2-2h6a2 2 0 0 1 2 2v5" fill="none" stroke="#1ca4d8" stroke-width="2"/><rect x="9" y="13" width="4.500" height="4.500" fill="#f25022"/><rect x="14.500" y="13" width="4.500" height="4.500" fill="#7fba00"/><rect x="9" y="18.500" width="4.500" height="4.500" fill="#00a4ef"/><rect x="14.500" y="18.500" width="4.500" height="4.500" fill="#ffb900"/></svg></div>
    <div class="app dotted"><svg viewBox="0 0 28 34"><path d="M13 2c6 2 11 5 12 8v13c-3 6-9 9-14 9C6 30 3 26 3 20V10c3-4 6-7 10-8z" fill="#8b7be0"/><path d="M8 8c4-2 8-2 12 1l-4 18c-3 2-7 2-9 0z" fill="#f0edfb"/><path d="M8 8c-2 4-2 12 0 19 4-2 6-8 6-15z" fill="#5fb0e8"/></svg></div>
    <div class="app dotted"><svg viewBox="0 0 32 34"><path d="M10 14l14-5v22L10 28z" fill="#0f6cbd"/><path d="M3 12h15v14H3z" fill="#0a5a9e"/><text x="6" y="24" font-size="11" font-weight="700" font-family="Liberation Sans" fill="#fff">O</text><circle cx="24" cy="9" r="8.500" fill="#0f6cbd"/><path d="M20 6h8v6h-8zM20 6l4 3 4-3" fill="none" stroke="#fff" stroke-width="1.100"/><path d="M10 26l9-6 9 6v7H10z" fill="#28a8ea"/></svg></div>
    <div class="app dotted"><svg viewBox="0 0 30 32"><rect x="1" y="3" width="28" height="26" rx="2" fill="#1366c0"/><rect x="1" y="3" width="6" height="26" fill="#0d4f96"/><circle cx="15" cy="12" r="5" fill="#3fc3ee"/><path d="M6 30c1-11 17-11 18 0z" fill="#3fc3ee"/></svg></div>
    <div class="app dotted"><svg viewBox="0 0 32 32"><circle cx="16" cy="16" r="15" fill="#dd4a3c"/><path d="M16 16L29 23.500A15 15 0 0 1 9 29.200z" fill="#3aa757"/><path d="M16 16h15a15 15 0 0 1-7.500 13z" fill="#f8c120"/><circle cx="16" cy="16" r="7.500" fill="#fff"/><circle cx="16" cy="16" r="5.800" fill="#4688f0"/></svg></div>
    <div class="app dotted"><svg viewBox="0 0 30 30"><rect x="1" y="2" width="28" height="26" fill="#999"/><rect x="3" y="6" width="24" height="20" fill="#111"/><path d="M5 9h5M5 12h8M5 15h3" stroke="#ddd" stroke-width="1"/></svg></div>
    <div class="app app-on"><svg viewBox="0 0 36 34"><circle cx="24" cy="10" r="4.500" fill="#5059c9"/><rect x="19" y="16" width="14" height="14" rx="5" fill="#5059c9"/><circle cx="16" cy="8" r="5.500" fill="#7b83eb"/><rect x="9" y="14" width="16" height="18" rx="3" fill="#7b83eb"/><rect x="2" y="12" width="17" height="17" rx="2" fill="#4b53bc"/><path d="M6 16h9M10.500 16v9" stroke="#fff" stroke-width="1.800"/></svg><b class="app-badge">1</b></div>
    <div class="app dotted"><svg viewBox="0 0 30 30"><path d="M6 2h23l-5 26H1z" fill="#2d7dd2"/><path d="M9 8l8 6-10 7M14 22h7" fill="none" stroke="#fff" stroke-width="1.800"/></svg></div>
    <div class="app dotted"><svg viewBox="0 0 30 34"><rect x="3" y="1" width="20" height="24" rx="2" fill="#f0f0f0"/><path d="M6 5h3M11 5h3M16 5h3M6 5v3" stroke="#d84020" stroke-width="2.500"/><rect x="10" y="10" width="10" height="12" fill="#bbb"/><path d="M16 20l6 10M26 18l-11 13" stroke="#666" stroke-width="1.500"/><circle cx="25" cy="19" r="2.500" fill="none" stroke="#2a9fd8" stroke-width="1.500"/><circle cx="14" cy="31" r="2.500" fill="none" stroke="#2a9fd8" stroke-width="1.500"/></svg></div>
  </div>
  <div class="tray">
    <svg class="t-chev" viewBox="0 0 18 12"><path d="M1 11l8-9 8 9" fill="none" stroke="#111" stroke-width="1.300"/></svg>
    <svg class="t-cloud" viewBox="0 0 24 18"><path d="M6 17a5 5 0 0 1-1-10 7 7 0 0 1 13-1 5.500 5.500 0 0 1 1 11z" fill="#0f78d4"/></svg>
    <div class="t-mic"><svg viewBox="0 0 22 28"><rect x="8" y="2" width="7" height="14" rx="3.500" fill="none" stroke="#111" stroke-width="1.100"/><path d="M5 12c0 5 3 7 6.500 7s6.500-2 6.500-7M11.500 19v6M3 2l17 24" fill="none" stroke="#111" stroke-width="1.100"/></svg></div>
    <div class="t-lang"><div>ENG</div><div>IN</div></div>
    <svg class="t-sys" viewBox="0 0 22 20"><path d="M2 7c5-5 13-5 18 0M5 10.500c3.500-3.500 8.500-3.500 12 0M8 14c2-2 4-2 6 0" fill="none" stroke="#111" stroke-width="1.300"/><circle cx="11" cy="17" r="1.400" fill="#111"/></svg>
    <svg class="t-sys" viewBox="0 0 22 20"><path d="M2 7h4l5-5v16l-5-5H2zM14 6c2 2 2 6 0 8M17 3c3 4 3 10 0 14" fill="none" stroke="#111" stroke-width="1.200"/></svg>
    <svg class="t-sys" viewBox="0 0 24 16"><rect x="2" y="1" width="18" height="14" rx="3" fill="none" stroke="#111" stroke-width="1.300"/><rect x="5" y="4" width="8" height="8" fill="#111"/><path d="M22 6v4" stroke="#111" stroke-width="1.600"/></svg>
    <div class="t-clock"><div>04:10</div><div>05-09-2023</div></div>
    <div class="t-badge">22</div>
  </div>
</footer>
</body>
</html>
```

FILE: styles.css
```css
* {
  box-sizing: border-box;
}

html, body {
  margin: 0;
  padding: 0;
}

body {
  width: 1920px;
  height: 1080px;
  overflow: hidden;
  background: #141414;
  color: #fff;
  font-family: "Open Sans", sans-serif;
}

i, em {
  font-style: normal;
}

.defs {
  display: none;
}

/* teams window title */
.titlebar {
  height: 49px;
  background: #0a0a0a;
  border-bottom: 1px solid #222;
  display: flex;
  align-items: center;
  justify-content: center;
  position: relative;
}

.title {
  font-size: 16.5px;
  color: #f4f4f4;
}

.win-btns {
  position: absolute;
  right: 15px;
  top: 13px;
  display: flex;
  gap: 30px;
}

.win-btns svg {
  width: 20px;
  height: 20px;
}

/* teams call toolbar */
.toolbar {
  height: 75px;
  background: #292929;
  display: flex;
  align-items: center;
  padding-right: 25px;
}

.meeting {
  display: flex;
  align-items: center;
  margin-right: auto;
  padding-left: 25px;
  font-size: 15.5px;
  color: #ddd;
}

.shield {
  width: 20px;
  height: 22px;
  margin-right: 25px;
}

.tool {
  width: 70px;
  height: 60px;
  padding-top: 3px;
  display: flex;
  flex-direction: column;
  align-items: center;
  flex: none;
}

.tool svg {
  width: 30px;
  height: 30px;
  margin: 1px 0 3px;
}

.tool label {
  font-size: 13px;
  line-height: 18px;
  margin-top: 2px;
  color: #d6d6d6;
}

.tool.bright label {
  color: #fff;
}

.people-ic {
  display: flex;
  align-items: center;
  margin-left: 8px;
}

.people-ic b {
  font-size: 14px;
  margin-left: 1px;
  color: #ddd;
}

.tool-on {
  width: 58px;
  margin: 0 6px;
  padding-top: 1px;
  border: 2px solid #fff;
  background: #1f1f1f;
}

.tool-on label {
  color: #fff;
  margin-top: 0;
}

.tool-sep {
  width: 1px;
  height: 40px;
  margin: 0 10.3px;
  background: #555;
  flex: none;
}

.leave {
  width: 114px;
  height: 40px;
  margin-left: 13px;
  background: #cf333d;
  border-radius: 4px;
  display: flex;
  align-items: center;
  justify-content: center;
  gap: 10px;
  font-size: 16px;
  font-weight: 600;
  flex: none;
}

.leave svg {
  width: 25px;
  height: 16px;
}

/* stage */
.stage {
  height: 896px;
  display: flex;
  background: #141414;
}

.left-col {
  width: 248px;
  flex: none;
  display: flex;
  align-items: flex-end;
  gap: 11px;
  padding: 0 0 16px 16px;
}

.name-pill {
  width: 144px;
  height: 30px;
  background: #0c0c0c;
  border-radius: 5px;
  display: flex;
  align-items: center;
  justify-content: center;
  font-size: 14.4px;
  white-space: nowrap;
}

.zoom-pill {
  flex: 1;
  height: 30px;
  background: #0c0c0c;
  border-radius: 5px 0 0 5px;
  display: flex;
  align-items: center;
  gap: 25px;
  padding-left: 15px;
  font-size: 22px;
  font-weight: 300;
}

.zoom-pill .dim {
  color: #888;
}

.right-col {
  flex: 1;
  display: flex;
  justify-content: flex-end;
  padding: 6px 8px 0 0;
}

.collapse {
  width: 32px;
  height: 108px;
  background: #222;
  display: flex;
  align-items: center;
  justify-content: center;
}

.collapse svg {
  width: 14px;
  height: 24px;
}

.share {
  width: 1424px;
  flex: none;
  height: 887px;
  margin-top: 6px;
  background: #05030f;
  display: flex;
  flex-direction: column;
  font-family: "Liberation Sans", Arial, sans-serif;
}

/* mac menu bar */
.mac-menu {
  height: 22px;
  background: #2a0a9c;
  display: flex;
  align-items: center;
  font-size: 13px;
  color: #e8e4ff;
  padding: 0 0 4px 20px;
  flex: none;
}

.apple {
  width: 14px;
  height: 16px;
  margin-right: 20px;
}

.mac-menu b {
  color: #fff;
  margin-right: 21px;
}

.mac-menu > span {
  margin-right: 21px;
}

.mac-status {
  margin-left: auto;
  display: flex;
  align-items: center;
  gap: 15px;
  padding-right: 19px;
  white-space: nowrap;
}

.mac-status svg {
  width: 18px;
  height: 16px;
}

.mac-status svg:nth-child(4) {
  width: 24px;
}

/* excel window */
.xl {
  height: 797px;
  background: #2b2b2b;
  border-radius: 10px;
  overflow: hidden;
  display: flex;
  flex-direction: column;
  flex: none;
  color: #c8c8c8;
}

.xl-title {
  height: 33px;
  display: grid;
  grid-template-columns: 1fr auto 1fr;
  align-items: center;
  flex: none;
}

.xl-title-l {
  display: flex;
  align-items: center;
  padding-left: 14px;
}

.dot {
  width: 11px;
  height: 11px;
  border-radius: 50%;
  margin-right: 9px;
}

.red { background: #ec4a5a; }
.yellow { background: #f0b92f; }
.green { background: #2cc840; }

.qa {
  width: 20px;
  height: 20px;
  margin-right: 7px;
}

.qa-first {
  margin-left: 20px;
}

.v-qa {
  margin: 0 10px 3px -1px;
}

.qa-more {
  font-weight: 700;
  font-size: 16px;
  letter-spacing: -.5px;
}

.xl-name {
  display: flex;
  align-items: center;
  gap: 4px;
  font-size: 13.7px;
  font-weight: 700;
  color: #ddd;
}

.xl-name svg {
  width: 12px;
  height: 15px;
}

.xl-title-r {
  display: flex;
  justify-content: flex-end;
  align-items: center;
  gap: 17px;
  padding-right: 11px;
}

.xl-title-r svg {
  width: 18px;
  height: 18px;
}

.xl-tabs {
  height: 28px;
  display: flex;
  align-items: center;
  font-size: 13.5px;
  padding-left: 12px;
  flex: none;
}

.xl-tab {
  margin-right: 25.5px;
  line-height: 22px;
  padding-bottom: 1px;
  color: #c4c4c4;
}

.xl-tab.on {
  color: #eee;
  font-weight: 700;
  border-bottom: 2px solid #eee;
  margin-right: 22.5px;
}

.xl-share {
  margin-left: auto;
  margin-right: 10px;
  width: 65px;
  height: 24px;
  background: #5a5a5a;
  border-radius: 3px;
  display: flex;
  align-items: center;
  justify-content: center;
  gap: 4px;
  font-size: 12px;
  font-weight: 700;
  color: #ccc;
}

.xl-share svg {
  width: 13px;
  height: 13px;
}

/* ribbon */
.ribbon {
  height: 75px;
  padding-top: 4px;
  display: flex;
  flex: none;
  font-size: 11px;
}

.rg {
  height: 63px;
  flex: none;
  border-right: 1px solid #444;
  padding-top: 6px;
}

.rrow {
  display: flex;
  align-items: center;
  height: 23px;
}

.rrow-2 {
  margin-top: 9px;
}

.v {
  display: inline-block;
  width: 5px;
  height: 5px;
  border-right: 1.3px solid #bbb;
  border-bottom: 1.3px solid #bbb;
  transform: rotate(45deg);
  flex: none;
}

.rg-clip {
  width: 105px;
  padding: 0 0 0 16px;
  display: flex;
}

.paste {
  width: 36px;
  display: flex;
  flex-direction: column;
  align-items: center;
  padding-top: 4px;
  font-size: 11px;
}

.paste svg {
  width: 30px;
  height: 32px;
}

.paste span {
  margin-top: 3px;
}

.v-paste {
  margin: 18px 0 0 -1px;
}

.clip-col {
  margin-left: 9px;
  padding-top: 4px;
  display: flex;
  flex-direction: column;
  gap: 3px;
  align-items: flex-start;
}

.clip-col svg {
  width: 16px;
  height: 18px;
  display: block;
}

.clip-col div {
  display: flex;
  align-items: center;
  gap: 6px;
}

.rg-font {
  width: 267px;
  padding-left: 10px;
}

.sel {
  height: 23px;
  background: #353535;
  border-radius: 3px;
  display: flex;
  align-items: center;
  justify-content: space-between;
  padding: 0 7px 2px 6px;
  font-size: 12px;
  color: #ccc;
}

.sel-font {
  width: 139px;
  margin-right: 3px;
}

.sel-size {
  width: 52px;
}

.a-big, .a-small {
  display: inline-block;
  margin-left: 7px;
  font-size: 17px;
  color: #bbb;
}

.a-small {
  font-size: 14px;
  margin-left: 11px;
}

sup {
  font-size: 9px;
  line-height: 0;
}

.tb {
  width: 25px;
  text-align: center;
  font-size: 14px;
  color: #bbb;
}

.tb-i {
  font-style: italic;
  font-family: "Liberation Serif", serif;
}

.rsep {
  width: 1px;
  height: 20px;
  background: #444;
  margin: 0 8px 0 9px;
  flex: none;
}

.ic-16 {
  width: 16px;
  height: 18px;
  margin-right: 8px;
  flex: none;
}

.ic-fill {
  margin-left: 3px;
}

.rg-align {
  width: 159px;
  padding-left: 8px;
}

.al {
  width: 16px;
  height: 16px;
  margin: 0 5px;
  color: #bbb;
  flex: none;
}

.al-on {
  display: flex;
  height: 23px;
  align-items: center;
  background: #4a4a4a;
  border-radius: 3px;
}

.al-on .al {
  margin: 0 4px;
}

.al-orient {
  margin-left: 20px;
  margin-right: 4px;
}

.rsep-al {
  margin: 0 6px 0 8px;
}

.al-ind {
  margin: 0 5px;
}

.al-ind2 {
  margin: 0 4px;
}

.rg-wrap {
  width: 138px;
  padding-left: 12px;
  font-size: 11px;
}

.rg-wrap .ic-16 {
  margin-right: 6px;
}

.rg-wrap .v {
  margin: 0 0 2px 8px;
  width: 4px;
  height: 4px;
}

.rg-num {
  width: 173px;
  padding-left: 11px;
}

.sel-num {
  width: 151px;
}

.pct {
  font-size: 17px;
  margin: 0 0 0 14px;
  color: #bbb;
}

.cma {
  font-size: 22px;
  font-weight: 700;
  line-height: 14px;
  margin: 0 3px 6px 10px;
  color: #bbb;
}

.dec {
  font-size: 9px;
  line-height: 10px;
  width: 26px;
  text-align: center;
  color: #999;
}

.rg-styles {
  width: 180px;
  padding: 0 0 0 11px;
  display: flex;
}

.rg-cells {
  width: 167px;
  padding: 0 0 0 7px;
  display: flex;
}

.big {
  padding-top: 3px;
  text-align: center;
  font-size: 10.7px;
  line-height: 11.5px;
  flex: none;
}

.big-ic {
  height: 34px;
  margin-bottom: 3px;
  display: flex;
  align-items: center;
  justify-content: center;
  gap: 5px;
}

.big-ic svg {
  width: 28px;
  height: 26px;
  flex: none;
}

.big-ic .v {
  width: 4px;
  height: 4px;
}

.bw56 { width: 56px; }
.bw54 { width: 54px; }
.bw50 { width: 50px; }
.bw48 { width: 48px; }

.rg-edit {
  flex: 1;
  border-right: none;
  padding: 0 0 0 12px;
  display: flex;
}

.edit-col {
  width: 86px;
  padding-top: 2px;
}

.edit-row {
  height: 21.500px;
  display: flex;
  align-items: center;
  font-size: 11px;
}

.edit-row .ic-16 {
  margin-right: 6px;
}

.edit-row .v {
  margin: 0 0 2px 8px;
  width: 4px;
  height: 4px;
}

/* yellow message bars */
.notice {
  height: 31px;
  background: #f8f3df;
  border-bottom: 1px solid #e2dcc6;
  display: flex;
  align-items: center;
  gap: 8px;
  padding: 0 8px 0 33px;
  color: #4a4a44;
  font-size: 12.7px;
  white-space: nowrap;
  flex: none;
}

.notice p {
  margin: 0 auto 0 0;
}

.notice b {
  margin-right: 8px;
  color: #3f3f3a;
  font-size: 11.9px;
  font-weight: 700;
}

.notice button {
  height: 18px;
  padding: 0 9px;
  border: 1px solid #c9c5b4;
  border-radius: 4px;
  background: #fbf8ec;
  font: 11.500px "Liberation Sans", Arial, sans-serif;
  color: #4a4a44;
}

.notice-2 {
  height: 30px;
  padding-left: 10px;
  border-bottom: none;
}

.notice-2 svg {
  width: 14px;
  height: 14px;
  margin-right: 1px;
}

/* formula bar */
.formula {
  height: 27px;
  background: #2b2b2b;
  display: flex;
  align-items: center;
  font-size: 12px;
  color: #bbb;
  flex: none;
  padding-left: 12px;
}

.name-box {
  width: 60px;
}

.stepper {
  width: 10px;
  display: flex;
  flex-direction: column;
  gap: 3px;
  margin-right: 18px;
}

.stepper i {
  width: 0;
  height: 0;
  border-left: 4px solid transparent;
  border-right: 4px solid transparent;
  border-bottom: 5px solid #aaa;
}

.stepper i + i {
  border-bottom: none;
  border-top: 5px solid #aaa;
}

.fx-x, .fx-c {
  width: 29px;
  color: #5c5c5c;
  font-size: 13px;
}

.fx {
  width: 21px;
  font-family: "Liberation Serif", serif;
  font-style: italic;
  font-size: 15px;
  color: #999;
}

.fx-input {
  width: 1229px;
  height: 20px;
  background: #3a3a3a;
  margin-left: 2px;
}

.fx-arrow {
  margin-left: 4px;
  border-left: 4px solid transparent;
  border-right: 4px solid transparent;
  border-top: 6px solid #aaa;
}

/* the spreadsheet */
.sheet {
  height: 525px;
  border-top: 2px solid #ddd;
  background: #fff;
  display: grid;
  grid-template-columns: 37.5px 110px 282.5px 109.5px 110px 179px 110px 115px 109px 109.5px 110px 42px;
  grid-template-rows: 35px 10px repeat(16, 28.65px) 19.6px;
  font-family: Lato, sans-serif;
  color: #111;
  overflow: hidden;
  flex: none;
}

.corner {
  background: #111;
  border-right: 1px solid #333;
  padding: 3px 1px 2px 3px;
}

.corner i {
  display: block;
  height: 100%;
  background: #555;
  clip-path: polygon(100% 0, 100% 100%, 0 100%);
}

.ch {
  background: #161616;
  color: #e8e8e8;
  border-right: 1px solid #3a3a3a;
  border-bottom: 1px solid #666;
  display: flex;
  align-items: center;
  justify-content: center;
  padding-top: 1px;
  font-family: "Liberation Sans", Arial, sans-serif;
  font-size: 16px;
}

.ch-on {
  background: #595b59;
  border-bottom: 2px solid #2f8a55;
}

.rh {
  background: #161616;
  color: #e8e8e8;
  border-bottom: 1px solid #3a3a3a;
  display: flex;
  align-items: center;
  justify-content: center;
  font-family: "Liberation Sans", Arial, sans-serif;
  font-size: 16px;
  overflow: hidden;
}

.rh-on {
  background: #595b59;
  border-right: 2px solid #2f8a55;
}

.c {
  border-right: 1px solid #dfe1e6;
  border-bottom: 1px solid #dfe1e6;
  background: #fff;
  min-width: 0;
}

.t {
  display: flex;
  align-items: center;
  padding: 0 3px 2px;
  font-size: 20.2px;
  white-space: nowrap;
  overflow: hidden;
}

.sheet-title {
  grid-row: span 2;
  background: #6770c9;
  color: #f4f5ff;
  border: none;
  display: flex;
  align-items: center;
  justify-content: center;
  font-size: 36.6px;
  font-weight: 300;
  white-space: nowrap;
}

.cursor-cell {
  position: relative;
}

.cursor-cell svg {
  position: absolute;
  left: 47px;
  top: 2px;
  width: 15px;
  height: 15px;
}

.fill {
  background: #6770c9;
  border-color: #6770c9;
  color: #0b0b2a;
}

.navy {
  color: #141a52;
}

.fill-2 {
  background: #b4b8e6;
  border-color: #b4b8e6;
}

.input {
  background: #f0f1f9;
  border: 1.5px solid #222;
}

.lbl {
  color: #eef0ff;
}

.acct {
  justify-content: space-between;
  padding: 0 30px 2px 8px;
}

.num {
  justify-content: flex-end;
  padding-right: 2px;
}

.textbox {
  grid-column: span 3;
  grid-row: span 8;
  border-right: 1px solid #dfe1e6;
  padding-left: 3px;
  font-size: 17px;
  line-height: 25.6px;
  color: #222;
  overflow: visible;
  white-space: nowrap;
}

.textbox-in {
  margin-top: -3px;
}

.textbox b {
  letter-spacing: .35px;
}

.banner {
  grid-column: span 6;
  background: #6770c9;
  border: none;
  color: #f6f7ff;
  font-size: 21.2px;
  font-weight: 700;
  overflow: hidden;
  white-space: nowrap;
  padding: 0 0 2px 26px;
  display: flex;
  align-items: center;
}

.active {
  border: 2px solid #2f7d4f;
  position: relative;
}

.active::after {
  content: "";
  position: absolute;
  right: -4px;
  bottom: -4px;
  width: 6px;
  height: 6px;
  background: #2f7d4f;
}

/* sheet tabs */
.sheet-tabs {
  height: 26px;
  background: #1f1f1f;
  border-top: 1px solid #666;
  display: flex;
  align-items: stretch;
  font-size: 12.4px;
  color: #7e7e7e;
  flex: none;
}

.tab-nav {
  width: 61px;
  display: flex;
  align-items: center;
  gap: 15px;
  padding-left: 14px;
  border-right: 1px solid #444;
  margin: 2px 0 4px;
}

.arr-l {
  border-top: 5px solid transparent;
  border-bottom: 5px solid transparent;
  border-right: 6px solid #555;
}

.arr-r {
  border-top: 5px solid transparent;
  border-bottom: 5px solid transparent;
  border-left: 6px solid #ccc;
}

.stab {
  display: flex;
  align-items: center;
  justify-content: center;
  border-right: 1px solid #444;
  margin: 2px 0 4px;
  white-space: nowrap;
  overflow: hidden;
  flex: none;
}

.stab-on {
  background: #fff;
  color: #207a47;
  font-weight: 700;
  margin: 0 0 2px;
  border: none;
  font-size: 12px;
}

.st-78 { width: 78px; }
.st-190 { width: 190px; border-right: none; }
.st-136 { width: 136px; }
.st-133 { width: 133px; }
.st-112 { width: 112.5px; }
.st-142 { width: 141.5px; }
.st-132 { width: 132px; }
.st-159 { width: 159px; }
.st-81 { width: 81px; justify-content: flex-start; padding-left: 20px; }
.st-37 { width: 37px; }

.plus {
  color: #bbb;
  font-size: 20px;
  font-weight: 700;
}

/* status bar */
.statusbar {
  flex: 1;
  background: linear-gradient(#3d3d3d, #2c2c2c);
  display: flex;
  align-items: center;
  font-size: 12.5px;
  color: #c6c6c6;
  padding-left: 24px;
}

.ready {
  margin-right: 20px;
  font-size: 12px;
}

.statusbar > svg {
  width: 15px;
  height: 15px;
  margin-right: 2px;
}

.status-r {
  margin-left: auto;
  display: flex;
  align-items: center;
  height: 100%;
  padding-right: 25px;
  font-size: 11.5px;
}

.vw {
  width: 35.5px;
  height: 100%;
  display: flex;
  align-items: center;
  justify-content: center;
}

.vw svg {
  width: 14px;
  height: 14px;
}

.vw-on {
  background: #555;
}

.zm {
  width: 24px;
  text-align: center;
  font-size: 15px;
  font-weight: 700;
}

.slider {
  width: 98px;
  height: 4px;
  background: #666;
  border-radius: 2px;
  position: relative;
}

.slider i {
  position: absolute;
  left: 50px;
  top: -6px;
  width: 16px;
  height: 16px;
  border-radius: 50%;
  background: #8c8c8c;
}

.pct-z {
  margin-left: 7px;
  width: 30px;
  white-space: nowrap;
}

/* mac dock */
.dock-strip {
  flex: 1;
  padding: 9px 38px 0;
}

.dock {
  height: 54px;
  width: 1347px;
  border: 1px solid #3a2a70;
  border-radius: 14px;
  background: linear-gradient(90deg, #0c0622 0%, #140a34 30%, #42107a 62%, #4a1488 85%, #2a0f66 100%);
  display: flex;
  align-items: flex-start;
  gap: 10px;
  padding: 7px 0 0 6px;
}

.di {
  width: 35px;
  height: 35px;
  flex: none;
  position: relative;
}

.di svg {
  display: block;
  width: 100%;
  height: 100%;
}

.lit::after {
  content: "";
  position: absolute;
  left: 16px;
  bottom: -7px;
  width: 3px;
  height: 3px;
  border-radius: 50%;
  background: #c99bf5;
}

.cal {
  width: 100%;
  height: 100%;
  background: #fff;
  border-radius: 8px;
  overflow: hidden;
  text-align: center;
  color: #222;
}

.cal b {
  display: block;
  height: 11px;
  background: #e23c3c;
  color: #fff;
  font-size: 8px;
  line-height: 11px;
}

.cal span {
  font-size: 22px;
  line-height: 24px;
}

.share-bar {
  width: 434.5px;
  height: 41px;
  margin-top: 1px;
  background: #2a2a2c;
  opacity: .97;
  position: relative;
  z-index: 1;
  display: flex;
  align-items: center;
  padding-left: 26px;
  font-size: 13px;
  color: #d6d6d6;
}

.pause {
  width: 7px;
  height: 11px;
  border-left: 2px solid #aaa;
  border-right: 2px solid #aaa;
  position: absolute;
  left: 9px;
}

.share-txt {
  width: 258px;
  white-space: nowrap;
}

.stop {
  width: 105px;
  height: 30px;
  border-radius: 15px;
  background: #3f4344;
  color: #8b8f90;
  display: flex;
  align-items: center;
  justify-content: center;
  margin-right: 10px;
}

.hide {
  color: #b8545a;
  text-decoration: underline;
}

.badge-red {
  position: absolute;
  right: 35px;
  top: -4px;
  width: 12px;
  height: 5px;
  border-radius: 6px 6px 0 0;
  background: #d8242c;
}

.tv {
  margin-left: -20px;
  background: #141418;
  border-radius: 8px;
  display: flex;
  justify-content: flex-end;
  align-items: center;
  padding-right: 6px;
  color: #fff;
  font-weight: 700;
  font-size: 17px;
}

.dock-sep {
  width: 1px;
  height: 36px;
  background: #5a4a8a;
  margin: 0 5px 0 2px;
  flex: none;
}

.di-trash {
  width: 27px;
  margin: -3px 0 0 8px;
  height: 42px;
}

/* windows taskbar */
.taskbar {
  height: 60px;
  background: linear-gradient(90deg, #e5eef8 0%, #dfe8f7 25%, #d9e3f6 50%, #dde8f5 75%, #e1ebf6 100%);
  display: flex;
  align-items: center;
  color: #1a1a1a;
  font-size: 14.5px;
}

.weather {
  width: 475px;
  padding-left: 25px;
  display: flex;
  align-items: center;
  gap: 8px;
  line-height: 20px;
  flex: none;
}

.weather svg {
  width: 32px;
  height: 32px;
}

.weather-sub {
  color: #555;
}

.start {
  width: 30px;
  height: 30px;
  flex: none;
}

.search {
  width: 272px;
  height: 38px;
  margin-left: 17px;
  border-radius: 19px;
  background: #f3f6fc;
  display: flex;
  align-items: center;
  padding-left: 14px;
  font-size: 16px;
  color: #444;
  flex: none;
}

.search svg {
  width: 19px;
  height: 20px;
  margin-right: 12px;
}

.search-art {
  margin-left: auto;
  width: 70px;
  height: 36px;
  background: #000;
  border-radius: 18px;
  color: #fff;
  font-size: 9px;
  display: flex;
  align-items: center;
  justify-content: center;
}

.tb-apps {
  display: flex;
  margin-left: 3.5px;
  flex: none;
}

.app {
  width: 55px;
  height: 60px;
  display: flex;
  align-items: center;
  justify-content: center;
  position: relative;
}

.app svg {
  width: 32px;
  height: 34px;
}

.dotted::after {
  content: "";
  position: absolute;
  bottom: 5px;
  left: 24px;
  width: 7px;
  height: 7px;
  border-radius: 50%;
  background: #7a7f87;
}

.app-on {
  background: #eef3fb;
  border-radius: 5px;
  width: 46px;
  margin: 5px 4.5px;
  height: 50px;
}

.app-on::after {
  content: "";
  position: absolute;
  bottom: 1px;
  left: 13px;
  width: 20px;
  height: 4px;
  border-radius: 2px;
  background: #0067c0;
}

.app-badge {
  position: absolute;
  right: 3px;
  top: 3px;
  width: 17px;
  height: 17px;
  border-radius: 50%;
  background: #c4262e;
  color: #fff;
  font-size: 11px;
  text-align: center;
  line-height: 17px;
}

.tray {
  flex: 1;
  display: flex;
  align-items: center;
  margin-left: 71px;
}

.t-chev {
  width: 18px;
  height: 12px;
  margin-right: 11px;
}

.t-cloud {
  width: 22px;
  height: 17px;
  margin-right: 5px;
}

.t-mic {
  width: 38px;
  height: 48px;
  background: #eef3fb;
  border-radius: 5px;
  display: flex;
  align-items: center;
  justify-content: center;
}

.t-mic svg {
  width: 22px;
  height: 28px;
}

.t-lang {
  width: 56px;
  margin-right: 8px;
  text-align: center;
  line-height: 20px;
}

.t-sys {
  width: 24px;
  height: 20px;
  margin-right: 6px;
  flex: none;
}

.t-clock {
  width: 91px;
  text-align: right;
  line-height: 20px;
  white-space: nowrap;
}

.t-badge {
  width: 26px;
  height: 26px;
  margin-left: 6px;
  border-radius: 50%;
  background: #0067c0;
  color: #fff;
  font-size: 12px;
  text-align: center;
  line-height: 26px;
}
```
